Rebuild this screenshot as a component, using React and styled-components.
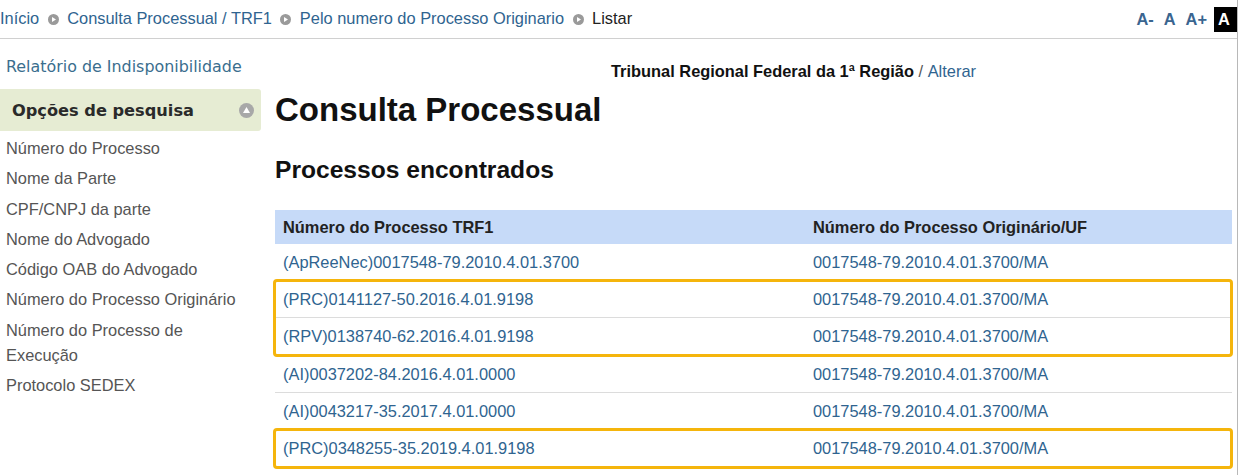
import React from 'react'
import styled, { createGlobalStyle } from 'styled-components'

const GlobalStyle = createGlobalStyle`
  html, body {
    margin: 0;
    padding: 0;
    background: #fff;
  }
  body {
    font-family: "Liberation Sans", Arial, sans-serif;
    font-size: 16.4px;
    color: #222;
  }
`

const LINK = '#2f6490'
const ORANGE = '#f5b50c'

const Page = styled.div`
  width: 1237px;
  height: 475px;
  border-right: 1px solid #b8b8b8;
  overflow: hidden;
`

const TopBar = styled.div`
  height: 38px;
  border-bottom: 1px solid #d0d0d0;
  display: flex;
  align-items: center;
  justify-content: space-between;
`

const Crumbs = styled.div`
  display: flex;
  align-items: center;
  gap: 8.5px;
  padding-bottom: 1px;
`

const Crumb = styled.a`
  color: ${p => (p.$current ? '#222' : LINK)};
  text-decoration: none;
  font-size: 16.4px;
`

const Sizer = styled.div`
  display: flex;
  align-items: center;
  gap: 10px;
  align-self: flex-start;
  padding-top: 7px;
`

const SizeBtn = styled.span`
  font-weight: bold;
  font-size: 16.4px;
  color: ${p => (p.$contrast ? '#fff' : '#3a6590')};
  background: ${p => (p.$contrast ? '#000' : 'transparent')};
  height: 25px;
  line-height: 25px;
  padding: ${p => (p.$contrast ? '0 3px 0 4px' : '0')};
  margin-left: ${p => (p.$contrast ? '-3px' : '0')};
  width: ${p => (p.$contrast ? '16px' : 'auto')};
`

const Body = styled.div`
  display: grid;
  grid-template-columns: 261px 1fr;
  column-gap: 14px;
`

const Side = styled.aside`
  display: flex;
  flex-direction: column;
`

const Report = styled.a`
  font-family: "DejaVu Sans", Verdana, sans-serif;
  font-size: 15.9px;
  color: #3a6e8e;
  text-decoration: none;
  padding: 18px 0 0 6px;
  height: 32px;
`

const OptionsHead = styled.div`
  height: 42px;
  background: #e6ecd3;
  border-radius: 0 3px 3px 0;
  display: flex;
  align-items: center;
  justify-content: space-between;
  padding: 0 7px 0 12px;
  font-family: "DejaVu Sans", Verdana, sans-serif;
  font-weight: bold;
  font-size: 16.2px;
  color: #2a2a2a;
`

const Menu = styled.ul`
  list-style: none;
  margin: 5px 0 0;
  padding: 0 0 0 6px;
`

const MenuItem = styled.li`
  color: #555;
  font-size: 16.4px;
  line-height: 25px;
  margin-bottom: 5.3px;
`

const Main = styled.main`
  display: flex;
  flex-direction: column;
  padding-right: 5px;
`

const Court = styled.div`
  text-align: center;
  padding: 23px 0 0 80px;
  height: 19px;
  line-height: 19px;
  font-size: 16.4px;
  font-weight: bold;
  color: #111;
`

const Alter = styled.span`
  font-weight: normal;
  color: ${LINK};
`

const Slash = styled.span`
  font-weight: normal;
  color: #555;
`

const Title = styled.h1`
  margin: 10px 0 0;
  font-size: 33px;
  line-height: 38px;
  font-weight: bold;
  color: #111;
`

const SubTitle = styled.h2`
  margin: 26px 0 0;
  font-size: 24.6px;
  line-height: 30px;
  font-weight: bold;
  color: #111;
`

const Table = styled.div`
  margin-top: 25px;
  display: flex;
  flex-direction: column;
`

const HeadRow = styled.div`
  display: grid;
  grid-template-columns: 530px 1fr;
  height: 34px;
  align-items: center;
  background: #c6daf8;
  font-weight: bold;
  color: #222;
`

const Row = styled.div`
  display: grid;
  grid-template-columns: 530px 1fr;
  height: 37px;
  align-items: center;
  border-bottom: ${p => (p.$last ? 'none' : '1px solid #dcdcdc')};
  box-sizing: border-box;
`

const Cell = styled.div`
  padding-left: 8px;
  color: ${LINK};
`

const HeadCell = styled.div`
  padding-left: 8px;
`

const Highlight = styled.div`
  position: relative;
  border-bottom: 1px solid #dcdcdc;

  &::after {
    content: "";
    position: absolute;
    left: -2px;
    right: -1px;
    top: -2px;
    bottom: -2px;
    border: 3px solid ${ORANGE};
    border-radius: 4px;
    pointer-events: none;
  }
`

const Bullet = () => (
  <svg width="11" height="11" viewBox="0 0 11 11" style={{ marginTop: 2 }}>
    <circle cx="5.5" cy="5.5" r="5.5" fill="#9a9a9a" />
    <path d="M4 3 L8 5.5 L4 8 Z" fill="#fff" />
  </svg>
)

const Collapse = () => (
  <svg width="15" height="15" viewBox="0 0 15 15">
    <circle cx="7.5" cy="7.5" r="7.5" fill="#a8a8a8" />
    <path d="M7.5 4 L11 10 L4 10 Z" fill="#fff" />
  </svg>
)

const menu = [
  'Número do Processo',
  'Nome da Parte',
  'CPF/CNPJ da parte',
  'Nome do Advogado',
  'Código OAB do Advogado',
  'Número do Processo Originário',
  'Número do Processo de Execução',
  'Protocolo SEDEX',
]

const orig = '0017548-79.2010.4.01.3700/MA'

const groups = [
  { mark: false, rows: ['(ApReeNec)0017548-79.2010.4.01.3700'] },
  { mark: true, rows: ['(PRC)0141127-50.2016.4.01.9198', '(RPV)0138740-62.2016.4.01.9198'] },
  { mark: false, rows: ['(AI)0037202-84.2016.4.01.0000', '(AI)0043217-35.2017.4.01.0000'] },
  { mark: true, rows: ['(PRC)0348255-35.2019.4.01.9198'] },
]

const renderRows = (rows, noLastLine) =>
  rows.map((r, i) => (
    <Row key={r} $last={noLastLine && i === rows.length - 1}>
      <Cell>{r}</Cell>
      <Cell>{orig}</Cell>
    </Row>
  ))

export default function App() {
  return (
    <Page>
      <GlobalStyle />
      <TopBar>
        <Crumbs>
          <Crumb href="#">Início</Crumb>
          <Bullet />
          <Crumb href="#">Consulta Processual / TRF1</Crumb>
          <Bullet />
          <Crumb href="#">Pelo numero do Processo Originario</Crumb>
          <Bullet />
          <Crumb $current>Listar</Crumb>
        </Crumbs>
        <Sizer>
          <SizeBtn>A-</SizeBtn>
          <SizeBtn>A</SizeBtn>
          <SizeBtn>A+</SizeBtn>
          <SizeBtn $contrast>A</SizeBtn>
        </Sizer>
      </TopBar>
      <Body>
        <Side>
          <Report href="#">Relatório de Indisponibilidade</Report>
          <OptionsHead>
            Opções de pesquisa
            <Collapse />
          </OptionsHead>
          <Menu>
            {menu.map(m => (
              <MenuItem key={m}>{m === 'Número do Processo de Execução' ? <>Número do Processo de<br />Execução</> : m}</MenuItem>
            ))}
          </Menu>
        </Side>
        <Main>
          <Court>
            Tribunal Regional Federal da 1ª Região <Slash>/</Slash> <Alter>Alterar</Alter>
          </Court>
          <Title>Consulta Processual</Title>
          <SubTitle>Processos encontrados</SubTitle>
          <Table>
            <HeadRow>
              <HeadCell>Número do Processo TRF1</HeadCell>
              <HeadCell>Número do Processo Originário/UF</HeadCell>
            </HeadRow>
            {groups.map((g, i) =>
              g.mark ? (
                <Highlight key={i}>{renderRows(g.rows, true)}</Highlight>
              ) : (
                <div key={i}>{renderRows(g.rows, false)}</div>
              )
            )}
          </Table>
        </Main>
      </Body>
    </Page>
  )
}
